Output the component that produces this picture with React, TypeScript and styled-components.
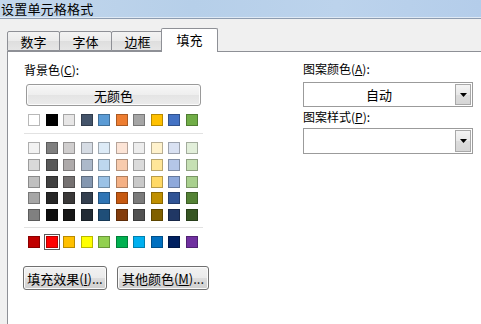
import React from "react";
import styled, { createGlobalStyle } from "styled-components";

const GlobalStyle = createGlobalStyle`
  html, body { margin: 0; padding: 0; }
  body {
    background: #f0f0f0;
    font-family: "Noto Sans CJK SC", "Noto Sans", "Liberation Sans", sans-serif;
    font-size: 12px;
    color: #000;
  }
`;

const Window = styled.div`
  width: 481px;
  height: 324px;
  overflow: hidden;
  background: #f0f0f0;
  display: flex;
  flex-direction: column;
`;

const TitleBar = styled.div`
  height: 17px;
  flex: none;
  background: linear-gradient(90deg, #c3d7ec 0%, #b6cfe9 40%, #bcd3ec 70%, #b4cdea 100%);
  border-bottom: 1px solid #dfe9f4;
  box-shadow: 0 1px 0 #8d9cb0;
  margin-bottom: 2px;
  padding-left: 1px;
  display: flex;
  align-items: center;
`;

const TitleText = styled.div`
  font-size: 13px;
  line-height: 15px;
  letter-spacing: 0.2px;
`;

const TabStrip = styled.div`
  height: 31px;
  flex: none;
  display: flex;
  align-items: flex-end;
  padding-left: 7px;
`;

const Tab = styled.div<{ $active?: boolean }>`
  box-sizing: border-box;
  width: ${(p) => (p.$active ? 57 : 53)}px;
  height: ${(p) => (p.$active ? 24 : 20)}px;
  margin-left: ${(p) => (p.$active ? -2 : 0)}px;
  margin-right: ${(p) => (p.$active ? 0 : -1)}px;
  margin-bottom: ${(p) => (p.$active ? -1 : 0)}px;
  border: 1px solid #8e9096;
  border-bottom: ${(p) => (p.$active ? "none" : "1px solid #8e9096")};
  border-radius: 2px 2px 0 0;
  background: ${(p) =>
    p.$active ? "#ffffff" : "linear-gradient(#f3f3f3, #ebebeb 50%, #dedede 51%, #e6e6e6)"};
  position: relative;
  z-index: ${(p) => (p.$active ? 2 : 1)};
  display: flex;
  align-items: center;
  justify-content: center;
  font-size: 13px;
  padding-bottom: ${(p) => (p.$active ? 2 : 0)}px;
`;

const Panel = styled.div`
  flex: 1;
  margin-left: 7px;
  background: #fff;
  border-left: 1px solid #8e9096;
  border-top: 1px solid #8e9096;
  display: flex;
`;

const LeftCol = styled.div`
  box-sizing: border-box;
  width: 295px;
  padding: 10px 0 0 16px;
  display: flex;
  flex-direction: column;
  align-items: flex-start;
`;

const RightCol = styled.div`
  width: 170px;
  padding-top: 9px;
  display: flex;
  flex-direction: column;
`;

const Label = styled.div<{ $top?: number }>`
  font-size: 12px;
  line-height: 16px;
  height: 16px;
  margin-top: ${(p) => p.$top ?? 0}px;
`;

const WideButton = styled.div`
  box-sizing: border-box;
  margin: 6px 0 0 2px;
  width: 175px;
  height: 22px;
  border: 1px solid #9a9a9a;
  border-radius: 3px;
  background: linear-gradient(#f7f7f7, #eeeeee 50%, #e4e4e4 51%, #ececec);
  box-shadow: inset 0 0 0 1px #fcfcfc;
  display: flex;
  align-items: center;
  justify-content: center;
  font-size: 13px;
`;

const SwatchRow = styled.div<{ $top: number }>`
  display: flex;
  gap: 5.55px;
  margin: ${(p) => p.$top}px 0 0 4px;
`;

const SwatchGrid = styled.div`
  display: grid;
  grid-template-columns: repeat(10, 12px);
  column-gap: 5.55px;
  row-gap: 4.75px;
  margin: 8px 0 0 4px;
`;

const Swatch = styled.div<{ $color: string; $selected?: boolean }>`
  box-sizing: border-box;
  width: 12px;
  height: 12px;
  background: ${(p) => p.$color};
  border: 1px solid rgba(0, 0, 0, 0.28);
  outline: ${(p) => (p.$selected ? "1.5px solid #5a5a5a" : "none")};
  outline-offset: 1px;
  ${(p) => (p.$selected ? "box-shadow: 0 0 0 1px #fff;" : "")}
`;

const Separator = styled.div<{ $top: number }>`
  width: 179px;
  height: 1px;
  background: #e2e2e2;
  margin-top: ${(p) => p.$top}px;
`;

const ButtonRow = styled.div`
  display: flex;
  gap: 10px;
  margin: 18px 0 0 -1px;
`;

const PushButton = styled.div<{ $w: number }>`
  box-sizing: border-box;
  width: ${(p) => p.$w}px;
  height: 24px;
  border: 1px solid #707070;
  border-radius: 3px;
  background: linear-gradient(#f2f2f2, #ebebeb 50%, #dddddd 51%, #cfcfcf);
  box-shadow: inset 0 0 0 1px #fbfbfb;
  display: flex;
  align-items: center;
  justify-content: center;
  font-size: 13px;
`;

const Combo = styled.div<{ $top: number; $h: number }>`
  box-sizing: border-box;
  margin-top: ${(p) => p.$top}px;
  width: 170px;
  height: ${(p) => p.$h}px;
  border: 1px solid #9b9b9b;
  background: #fff;
  display: flex;
  align-items: stretch;
`;

const ComboText = styled.div`
  flex: 1;
  display: flex;
  align-items: center;
  justify-content: center;
  font-size: 13px;
`;

const DropButton = styled.div`
  box-sizing: border-box;
  width: 16px;
  margin: 1px;
  border: 1px solid #a8a8a8;
  background: linear-gradient(#f4f4f4, #e8e8e8 50%, #dcdcdc 51%, #d6d6d6);
  display: flex;
  align-items: center;
  justify-content: center;
`;

const Arrow = () => (
  <svg width="7" height="4" viewBox="0 0 7 4">
    <path d="M0 0h7L3.5 4z" fill="#000" />
  </svg>
);

const themeRow = ["#FFFFFF", "#000000", "#E7E6E6", "#44546A", "#5B9BD5", "#ED7D31", "#A5A5A5", "#FFC000", "#4472C4", "#70AD47"];
const tints = [
  ["#F2F2F2", "#7F7F7F", "#D0CECE", "#D6DCE4", "#DDEBF7", "#FCE4D6", "#EDEDED", "#FFF2CC", "#D9E1F2", "#E2EFDA"],
  ["#D9D9D9", "#595959", "#AEAAAA", "#ACB9CA", "#BDD7EE", "#F8CBAD", "#DBDBDB", "#FFE699", "#B4C6E7", "#C6E0B4"],
  ["#BFBFBF", "#404040", "#757171", "#8497B0", "#9BC2E6", "#F4B084", "#C9C9C9", "#FFD966", "#8EA9DB", "#A9D08E"],
  ["#A6A6A6", "#262626", "#3A3838", "#333F4F", "#2F75B5", "#C65911", "#7B7B7B", "#BF8F00", "#305496", "#548235"],
  ["#808080", "#0D0D0D", "#161616", "#222B35", "#1F4E78", "#833C0C", "#525252", "#806000", "#203764", "#375623"],
];
const standard = ["#C00000", "#FF0000", "#FFC000", "#FFFF00", "#92D050", "#00B050", "#00B0F0", "#0070C0", "#002060", "#7030A0"];

export default function App() {
  return (
    <>
      <GlobalStyle />
      <Window>
        <TitleBar>
          <TitleText>设置单元格格式</TitleText>
        </TitleBar>
        <TabStrip>
          <Tab>数字</Tab>
          <Tab>字体</Tab>
          <Tab>边框</Tab>
          <Tab $active>填充</Tab>
        </TabStrip>
        <Panel>
          <LeftCol>
            <Label>
              背景色(<u>C</u>):
            </Label>
            <WideButton>无颜色</WideButton>
            <SwatchRow $top={8}>
              {themeRow.map((c) => (
                <Swatch key={c} $color={c} />
              ))}
            </SwatchRow>
            <Separator $top={7} />
            <SwatchGrid>
              {tints.flat().map((c, i) => (
                <Swatch key={i} $color={c} />
              ))}
            </SwatchGrid>
            <Separator $top={6} />
            <SwatchRow $top={8}>
              {standard.map((c, i) => (
                <Swatch key={c} $color={c} $selected={i === 1} />
              ))}
            </SwatchRow>
            <ButtonRow>
              <PushButton $w={84}>
                填充效果(<u>I</u>)...
              </PushButton>
              <PushButton $w={92}>
                其他颜色(<u>M</u>)...
              </PushButton>
            </ButtonRow>
          </LeftCol>
          <RightCol>
            <Label>
              图案颜色(<u>A</u>):
            </Label>
            <Combo $top={5} $h={25}>
              <ComboText>自动</ComboText>
              <DropButton>
                <Arrow />
              </DropButton>
            </Combo>
            <Label $top={2}>
              图案样式(<u>P</u>):
            </Label>
            <Combo $top={3} $h={26}>
              <ComboText />
              <DropButton>
                <Arrow />
              </DropButton>
            </Combo>
          </RightCol>
        </Panel>
      </Window>
    </>
  );
}
